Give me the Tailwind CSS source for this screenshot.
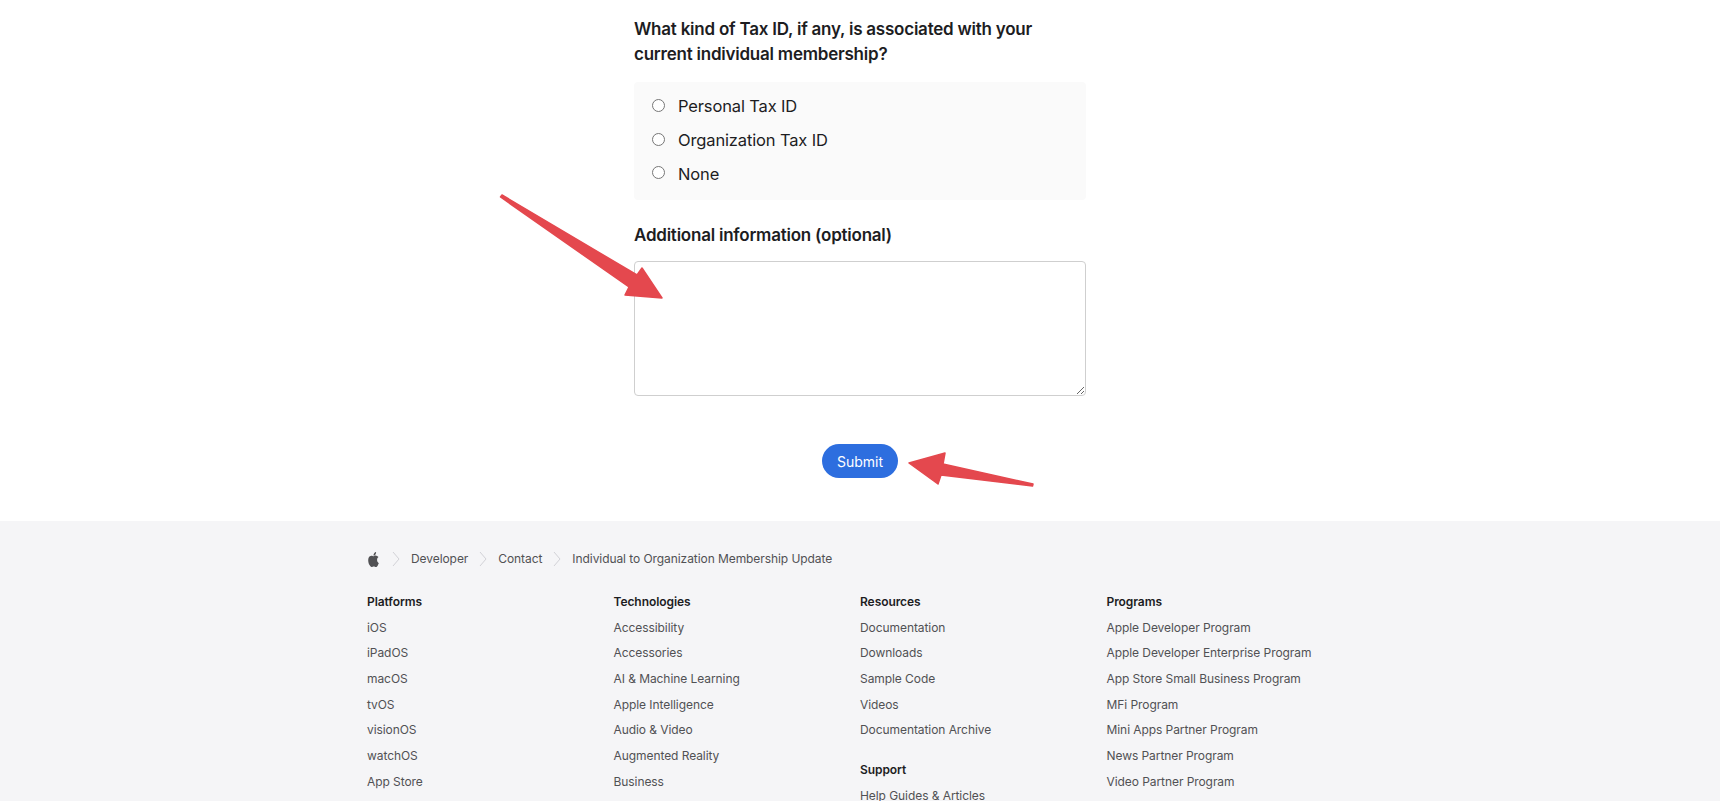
<!DOCTYPE html>
<html lang="en">
  <head>
    <meta charset="UTF-8" />
    <title>Individual to Organization Membership Update</title>
    <script src="https://cdn.jsdelivr.net/npm/@tailwindcss/browser@4"></script>
  </head>
  <body class="relative h-[801px] overflow-hidden bg-white font-['Inter','Liberation_Sans',sans-serif] text-[#1d1d1f]">
    <!-- Form -->
    <main class="mx-auto w-[452px] pt-[17px]">
      <h2 class="text-[17px] leading-[25px] font-semibold tracking-[-0.23px]">
        What kind of Tax ID, if any, is associated with your current individual membership?
      </h2>
      <div class="mt-[15px] h-[118px] rounded-sm bg-[#fafafa] pt-[7px] pl-4 text-[16.5px] tracking-[-0.14px]">
        <label class="flex h-[33.6px] items-center gap-[13px]"><input type="radio" name="taxid" class="ml-[2px]" /><span class="pt-[2px]">Personal Tax ID</span></label>
        <label class="flex h-[33.6px] items-center gap-[13px]"><input type="radio" name="taxid" class="ml-[2px]" /><span class="pt-[2px]">Organization Tax ID</span></label>
        <label class="flex h-[33.6px] items-center gap-[13px]"><input type="radio" name="taxid" class="ml-[2px]" /><span class="pt-[2px]">None</span></label>
      </div>
      <h2 class="mt-[22px] text-[17px] leading-[26px] font-semibold tracking-[-0.23px]">Additional information (optional)</h2>
      <textarea class="mt-[13px] block h-[135px] w-full rounded border border-[#cfcfcf]"></textarea>
      <div class="mt-[48px] flex justify-center">
        <button class="h-[34px] w-[76px] rounded-full bg-[#2d6edf] text-[14px] text-white">Submit</button>
      </div>
    </main>

    <!-- Footer -->
    <footer class="mt-[43px] h-[280px] bg-[#f5f5f7] pt-[25px]">
      <div class="mx-auto w-[986px] text-[12px] tracking-[-0.07px] text-[#515154]">
        <nav class="flex h-[26px] items-center">
          <svg class="h-[15px] w-[13px] fill-[#515154]" viewBox="0 0 24 24" preserveAspectRatio="none">
            <path d="M12.152 6.896c-.948 0-2.415-1.078-3.96-1.04-2.04.027-3.91 1.183-4.961 3.014-2.117 3.675-.546 9.103 1.519 12.09 1.013 1.454 2.208 3.09 3.792 3.039 1.52-.065 2.09-.987 3.935-.987 1.831 0 2.35.987 3.96.948 1.637-.026 2.676-1.48 3.676-2.948 1.156-1.688 1.636-3.325 1.662-3.415-.039-.013-3.182-1.221-3.22-4.857-.026-3.04 2.48-4.494 2.597-4.559-1.429-2.09-3.623-2.324-4.39-2.376-2-.156-3.675 1.09-4.61 1.09zM15.53 3.83c.843-1.012 1.4-2.427 1.245-3.83-1.207.052-2.662.805-3.532 1.818-.78.896-1.454 2.338-1.273 3.714 1.338.104 2.715-.688 3.559-1.701" />
          </svg>
          <svg class="mr-[11px] ml-[12px] h-[16px] w-[8px] fill-none stroke-[#d2d2d7]" viewBox="0 0 8 16"><path d="M1 1l6 7-6 7" /></svg>
          <span>Developer</span>
          <svg class="mx-[11px] h-[16px] w-[8px] fill-none stroke-[#d2d2d7]" viewBox="0 0 8 16"><path d="M1 1l6 7-6 7" /></svg>
          <span>Contact</span>
          <svg class="mx-[11px] h-[16px] w-[8px] fill-none stroke-[#d2d2d7]" viewBox="0 0 8 16"><path d="M1 1l6 7-6 7" /></svg>
          <span>Individual to Organization Membership Update</span>
        </nav>

        <div class="mt-[17px] grid grid-cols-4 leading-[25.65px]">
          <div>
            <h3 class="font-semibold text-[#1d1d1f]">Platforms</h3>
            <ul>
              <li>iOS</li>
              <li>iPadOS</li>
              <li>macOS</li>
              <li>tvOS</li>
              <li>visionOS</li>
              <li>watchOS</li>
              <li>App Store</li>
            </ul>
          </div>
          <div>
            <h3 class="font-semibold text-[#1d1d1f]">Technologies</h3>
            <ul>
              <li>Accessibility</li>
              <li>Accessories</li>
              <li>AI &amp; Machine Learning</li>
              <li>Apple Intelligence</li>
              <li>Audio &amp; Video</li>
              <li>Augmented Reality</li>
              <li>Business</li>
            </ul>
          </div>
          <div>
            <h3 class="font-semibold text-[#1d1d1f]">Resources</h3>
            <ul>
              <li>Documentation</li>
              <li>Downloads</li>
              <li>Sample Code</li>
              <li>Videos</li>
              <li>Documentation Archive</li>
            </ul>
            <h3 class="mt-[14px] font-semibold text-[#1d1d1f]">Support</h3>
            <ul>
              <li>Help Guides &amp; Articles</li>
            </ul>
          </div>
          <div>
            <h3 class="font-semibold text-[#1d1d1f]">Programs</h3>
            <ul>
              <li>Apple Developer Program</li>
              <li>Apple Developer Enterprise Program</li>
              <li>App Store Small Business Program</li>
              <li>MFi Program</li>
              <li>Mini Apps Partner Program</li>
              <li>News Partner Program</li>
              <li>Video Partner Program</li>
            </ul>
          </div>
        </div>
      </div>
    </footer>

    <!-- Red annotation arrows over the page -->
    <svg class="pointer-events-none absolute top-0 left-0 h-[801px] w-[1720px]" viewBox="0 0 1720 801">
      <path fill="#e4484e" stroke="#e4484e" stroke-width="1.5" stroke-linejoin="round" d="M500.5 197 L502 195 L637 275 L642 268 L662 298 L625 295 L629 287 Z" />
      <path fill="#e4484e" stroke="#e4484e" stroke-width="1.5" stroke-linejoin="round" d="M909 463 L945 453 L943 464 L1033 484 L1032.5 486 L941 475 L938 484 Z" />
    </svg>
  </body>
</html>
